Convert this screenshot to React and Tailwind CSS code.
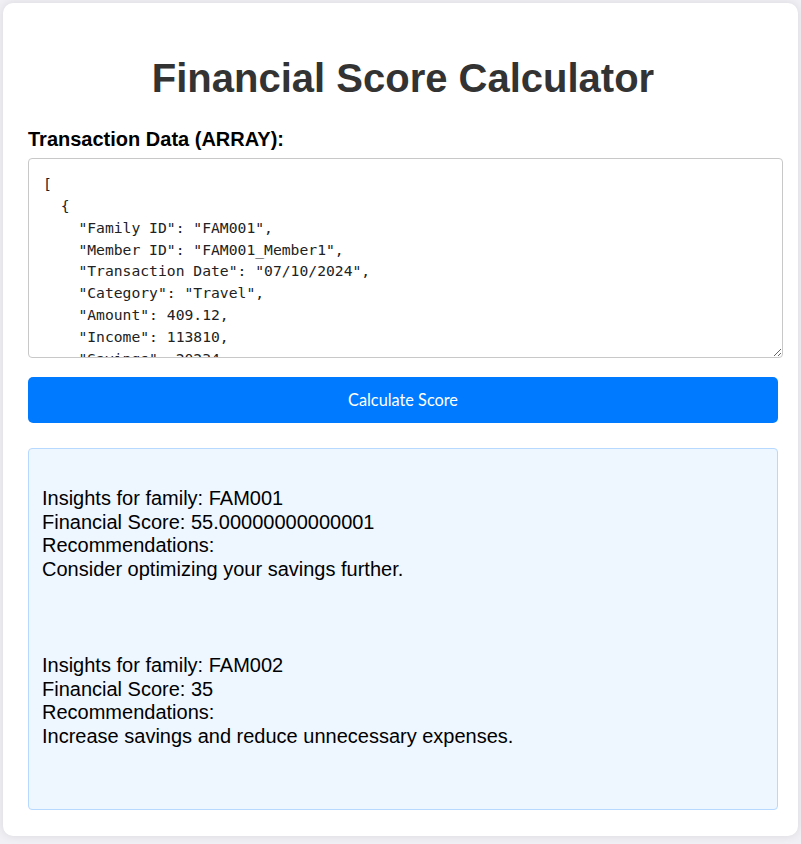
import React from "react";

const data = `[
  {
    "Family ID": "FAM001",
    "Member ID": "FAM001_Member1",
    "Transaction Date": "07/10/2024",
    "Category": "Travel",
    "Amount": 409.12,
    "Income": 113810,
    "Savings": 20234,
    "Monthly Expenses": 5781,
    "Loan Payments": 1124,
    "Credit Card Spending": 2420,
    "Dependents": 2,
    "Financial Goals Met (%)": 65
  }
]`;

const results = [
  {
    id: "FAM001",
    score: "55.00000000000001",
    rec: "Consider optimizing your savings further.",
  },
  {
    id: "FAM002",
    score: "35",
    rec: "Increase savings and reduce unnecessary expenses.",
  },
];

export default function App() {
  return (
    <div className="min-h-screen bg-[#f0f0f5] p-[3px] font-['Liberation_Sans',Arial,sans-serif]">
      <div className="w-[795px] bg-white rounded-[10px] shadow-[0_0_10px_rgba(0,0,0,0.1)] pl-[25px] pr-[20px] pt-[25px] pb-[26px]">
        <div className="w-[750px]">
          <h1 className="text-center text-[40px] leading-[46px] font-bold text-[#333] mt-[26.8px] mb-[26.8px]">
            Financial Score Calculator
          </h1>
          <label className="block text-[20px] leading-[23px] font-bold text-black mb-[7.4px]">
            Transaction Data (ARRAY):
          </label>
          <textarea
            readOnly
            defaultValue={data}
            className="block w-[755px] h-[200px] border border-[#c8c8c8] rounded-[4px] pt-[14px] px-[14px] pb-[14px] font-['DejaVu_Sans_Mono',monospace] text-[14.7px] leading-[21.86px] text-[#222] bg-white overflow-hidden outline-none"
          />
          <button className="block w-[750px] h-[46px] mt-[19px] rounded-[5px] bg-[#007bff] text-white text-[16.3px] font-['Lato',sans-serif]">
            Calculate Score
          </button>
          <div className="mt-[25px] w-[750px] h-[362px] bg-[#eef6ff] border border-[#b8d9ff] rounded-[4px] pl-[13px] pt-[38.5px] text-[20px] leading-[23.5px] text-black">
            {results.map((r, i) => (
              <div key={r.id} className={i > 0 ? "mt-[73px]" : ""}>
                <div>Insights for family: {r.id}</div>
                <div>Financial Score: {r.score}</div>
                <div>Recommendations:</div>
                <div>{r.rec}</div>
              </div>
            ))}
          </div>
        </div>
      </div>
    </div>
  );
}
